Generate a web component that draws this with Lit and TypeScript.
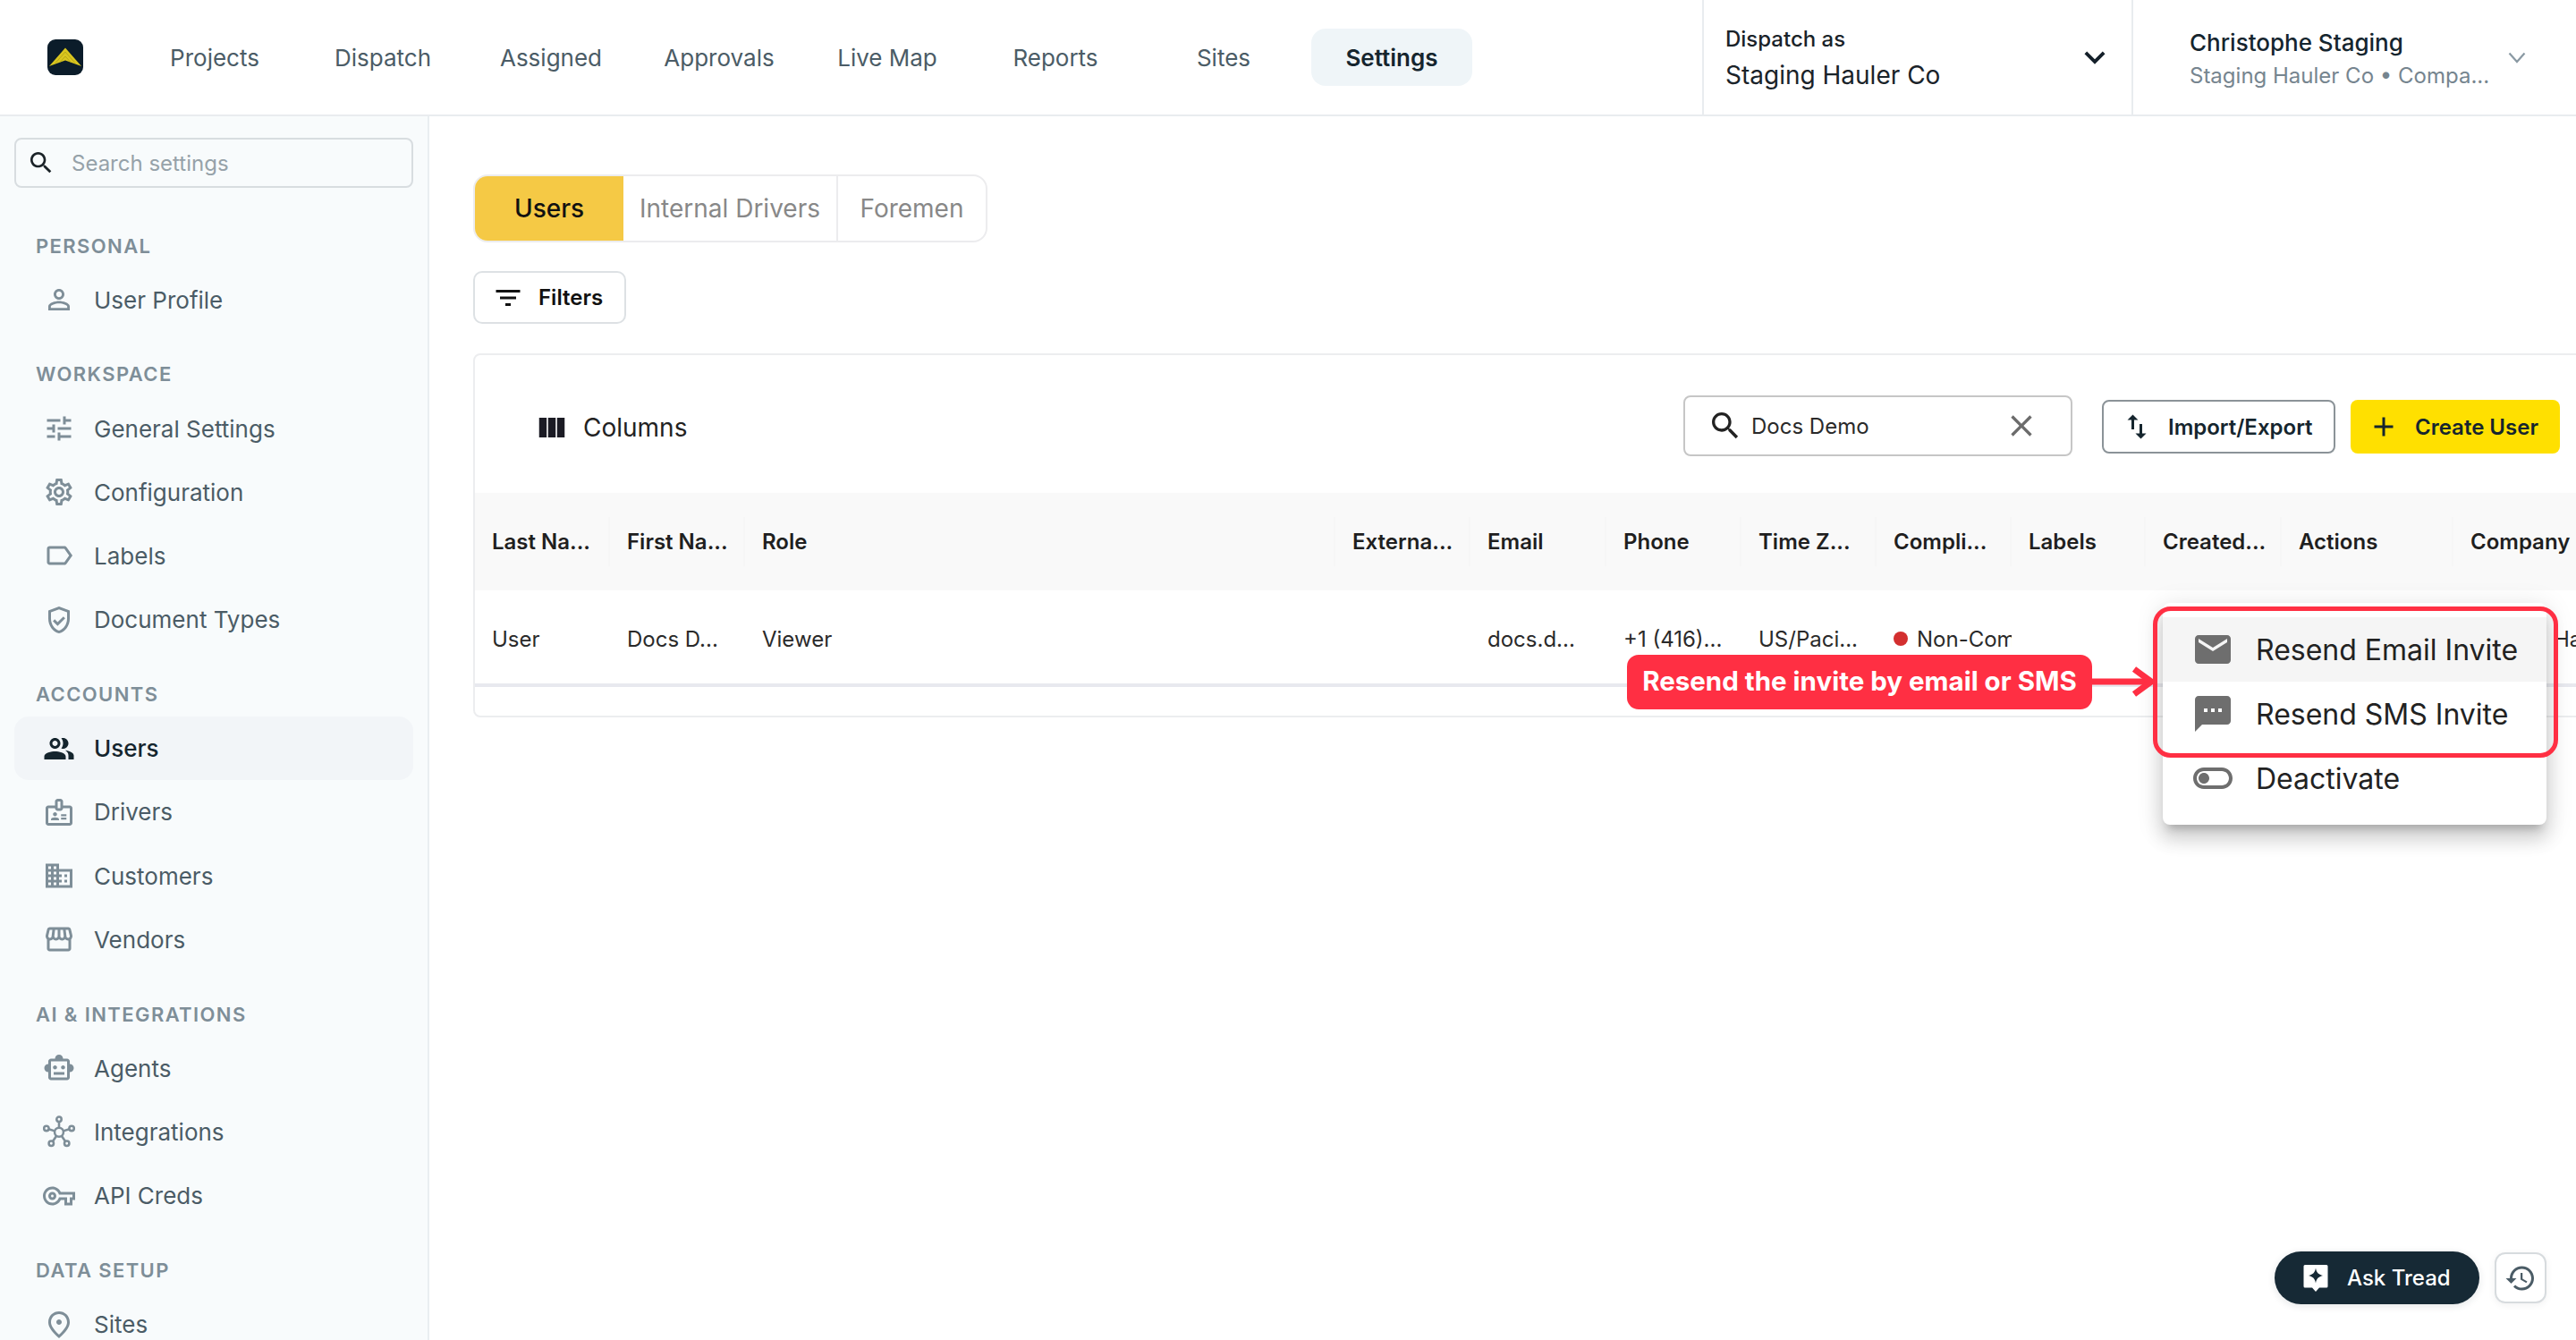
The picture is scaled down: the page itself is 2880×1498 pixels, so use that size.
import { LitElement, html, css } from "lit";
import { customElement } from "lit/decorators.js";

const P: Record<string, string> = {
  person: "M12 5.9c1.16 0 2.1.94 2.1 2.1s-.94 2.1-2.1 2.1S9.9 9.16 9.9 8s.94-2.1 2.1-2.1m0 9c2.97 0 6.1 1.46 6.1 2.1v1.1H5.9V17c0-.64 3.13-2.1 6.1-2.1M12 4C9.79 4 8 5.79 8 8s1.79 4 4 4 4-1.79 4-4-1.79-4-4-4zm0 9c-2.67 0-8 1.34-8 4v3h16v-3c0-2.66-5.33-4-8-4z",
  tune: "M3 17v2h6v-2H3zM3 5v2h10V5H3zm10 16v-2h8v-2h-8v-2h-2v6h2zM7 9v2H3v2h4v2h2V9H7zm14 4v-2H11v2h10zm-6-4h2V7h4V5h-4V3h-2v6z",
  gear: "M19.43 12.98c.04-.32.07-.64.07-.98 0-.34-.03-.66-.07-.98l2.11-1.65c.19-.15.24-.42.12-.64l-2-3.46c-.09-.16-.26-.25-.44-.25-.06 0-.12.01-.17.03l-2.49 1c-.52-.4-1.08-.73-1.69-.98l-.38-2.65C14.46 2.18 14.25 2 14 2h-4c-.25 0-.46.18-.49.42l-.38 2.65c-.61.25-1.17.59-1.69.98l-2.49-1c-.06-.02-.12-.03-.18-.03-.17 0-.34.09-.43.25l-2 3.46c-.13.22-.07.49.12.64l2.11 1.65c-.04.32-.07.65-.07.98 0 .33.03.66.07.98l-2.11 1.65c-.19.15-.24.42-.12.64l2 3.46c.09.16.26.25.44.25.06 0 .12-.01.17-.03l2.49-1c.52.4 1.08.73 1.69.98l.38 2.65c.03.24.24.42.49.42h4c.25 0 .46-.18.49-.42l.38-2.65c.61-.25 1.17-.59 1.69-.98l2.49 1c.06.02.12.03.18.03.17 0 .34-.09.43-.25l2-3.46c.12-.22.07-.49-.12-.64l-2.11-1.65zm-1.98-1.71c.04.31.05.52.05.73 0 .21-.02.43-.05.73l-.14 1.13.89.7 1.08.84-.7 1.21-1.27-.51-1.04-.42-.9.68c-.43.32-.84.56-1.25.73l-1.06.43-.16 1.13-.2 1.35h-1.4l-.19-1.35-.16-1.13-1.06-.43c-.43-.18-.83-.41-1.23-.71l-.91-.7-1.06.43-1.27.51-.7-1.21 1.08-.84.89-.7-.14-1.13c-.03-.31-.05-.54-.05-.74s.02-.43.05-.73l.14-1.13-.89-.7-1.08-.84.7-1.21 1.27.51 1.04.42.9-.68c.43-.32.84-.56 1.25-.73l1.06-.43.16-1.13.2-1.35h1.39l.19 1.35.16 1.13 1.06.43c.43.18.83.41 1.23.71l.91.7 1.06-.43 1.27-.51.7 1.21-1.07.85-.89.7.14 1.13zM12 8c-2.21 0-4 1.79-4 4s1.79 4 4 4 4-1.79 4-4-1.79-4-4-4zm0 6c-1.1 0-2-.9-2-2s.9-2 2-2 2 .9 2 2-.9 2-2 2z",
  label: "M17.63 5.84C17.27 5.33 16.67 5 16 5L5 5.01C3.9 5.01 3 5.9 3 7v10c0 1.1.9 1.99 2 1.99L16 19c.67 0 1.27-.33 1.63-.84L22 12l-4.37-6.16zM16 17H5V7h11l3.55 5L16 17z",
  shield: "M12 2 4 5v6.09c0 5.05 3.41 9.76 8 10.91 4.59-1.15 8-5.86 8-10.91V5l-8-3zm6 9.09c0 4-2.55 7.7-6 8.83-3.45-1.13-6-4.82-6-8.83v-4.7l6-2.25 6 2.25v4.7zm-9.18.46L7.4 12.96 10.94 16.5l5.66-5.66-1.41-1.41-4.24 4.24-2.13-2.12z",
  people: "M16.67 13.13C18.04 14.06 19 15.32 19 17v3h4v-3c0-2.18-3.57-3.47-6.33-3.87zM15 12c2.21 0 4-1.79 4-4s-1.79-4-4-4c-.47 0-.91.1-1.33.24C14.5 5.27 15 6.58 15 8s-.5 2.73-1.33 3.76c.42.14.86.24 1.33.24zM9 12c2.21 0 4-1.79 4-4s-1.79-4-4-4-4 1.79-4 4 1.79 4 4 4zm0-6c1.1 0 2 .9 2 2s-.9 2-2 2-2-.9-2-2 .9-2 2-2zM9 14c-2.67 0-8 1.2-8 3.6V20h16v-2.4C17 15.2 11.67 14 9 14z",
  badge: "M20 7h-5V4c0-1.1-.9-2-2-2h-2c-1.1 0-2 .9-2 2v3H4c-1.1 0-2 .9-2 2v11c0 1.1.9 2 2 2h16c1.1 0 2-.9 2-2V9c0-1.1-.9-2-2-2zM11 4h2v5h-2V4zm9 16H4V9h5c0 1.1.9 2 2 2h2c1.1 0 2-.9 2-2h5v11zM9 15c.83 0 1.5-.67 1.5-1.5S9.83 12 9 12s-1.5.67-1.5 1.5S8.17 15 9 15zm2.08 1.18C10.44 15.9 9.74 15.75 9 15.75s-1.44.15-2.08.43c-.56.24-.92.78-.92 1.39V18h6v-.43c0-.61-.36-1.15-.92-1.39zM13.5 13.5h4V15h-4zM13.5 16h4v1.5h-4z",
  domain: "M12 7V3H2v18h20V7H12zM6 19H4v-2h2v2zm0-4H4v-2h2v2zm0-4H4V9h2v2zm0-4H4V5h2v2zm4 12H8v-2h2v2zm0-4H8v-2h2v2zm0-4H8V9h2v2zm0-4H8V5h2v2zm10 12h-8v-2h2v-2h-2v-2h2v-2h-2V9h8v10zm-2-8h-2v2h2v-2zm0 4h-2v2h2v-2z",
  store: "M21.9 8.89l-1.05-4.37c-.22-.9-1-1.52-1.91-1.52H5.05c-.9 0-1.69.63-1.9 1.52L2.1 8.89c-.24 1.02-.02 2.06.62 2.88.08.11.19.19.28.29V19c0 1.1.9 2 2 2h14c1.1 0 2-.9 2-2v-6.94c.09-.09.2-.18.28-.28.64-.82.87-1.87.62-2.89zm-2.99-3.9 1.05 4.37c.1.42.01.84-.25 1.17-.14.18-.44.47-.94.47-.61 0-1.14-.49-1.21-1.14L16.98 5l1.93-.01zM13 5h1.96l.54 4.52c.05.39-.07.78-.33 1.07-.22.26-.54.41-.95.41-.67 0-1.22-.59-1.22-1.31V5zM8.49 9.52 9.04 5H11v4.69c0 .72-.55 1.31-1.29 1.31-.34 0-.65-.15-.89-.41-.25-.29-.37-.68-.33-1.07zm-4.45-.16L5.05 5h1.97l-.58 4.86c-.08.65-.6 1.14-1.21 1.14-.49 0-.8-.29-.93-.47-.27-.32-.36-.75-.26-1.17zM5 19v-6.03c.08.01.15.03.23.03.87 0 1.66-.36 2.24-.95.6.6 1.4.95 2.31.95.87 0 1.65-.36 2.23-.93.59.57 1.39.93 2.29.93.84 0 1.64-.35 2.24-.95.58.59 1.37.95 2.24.95.08 0 .15-.02.23-.03V19H5z",
  robot: "M20 9V7c0-1.1-.9-2-2-2h-3c0-1.66-1.34-3-3-3S9 3.34 9 5H6c-1.1 0-2 .9-2 2v2c-1.66 0-3 1.34-3 3s1.34 3 3 3v4c0 1.1.9 2 2 2h12c1.1 0 2-.9 2-2v-4c1.66 0 3-1.34 3-3s-1.34-3-3-3zm-2 10H6V7h12v12zm-9-6c-.83 0-1.5-.67-1.5-1.5S8.17 10 9 10s1.5.67 1.5 1.5S9.83 13 9 13zm7.5-1.5c0 .83-.67 1.5-1.5 1.5s-1.5-.67-1.5-1.5.67-1.5 1.5-1.5 1.5.67 1.5 1.5zM8 15h8v2H8v-2z",
  key: "M22 19h-6v-4h-2.68c-1.14 2.42-3.6 4-6.32 4-3.86 0-7-3.14-7-7s3.14-7 7-7c2.72 0 5.17 1.58 6.32 4H24v6h-2v4zm-4-2h2v-4h2v-2H11.94l-.23-.67C11.01 8.34 9.11 7 7 7c-2.76 0-5 2.24-5 5s2.24 5 5 5c2.11 0 4.01-1.34 4.71-3.33l.23-.67H18v4zM7 15c-1.65 0-3-1.35-3-3s1.35-3 3-3 3 1.35 3 3-1.35 3-3 3zm0-4c-.55 0-1 .45-1 1s.45 1 1 1 1-.45 1-1-.45-1-1-1z",
  place: "M12 12c-1.1 0-2-.9-2-2s.9-2 2-2 2 .9 2 2-.9 2-2 2zm6-1.8C18 6.57 15.35 4 12 4s-6 2.57-6 6.2c0 2.34 1.95 5.44 6 9.14 4.05-3.7 6-6.8 6-9.14zM12 2c4.2 0 8 3.22 8 8.2 0 3.32-2.67 7.25-8 11.8-5.33-4.55-8-8.48-8-11.8C4 5.22 7.8 2 12 2z",
  search: "M15.5 14h-.79l-.28-.27C15.41 12.59 16 11.11 16 9.5 16 5.91 13.09 3 9.5 3S3 5.91 3 9.5 5.91 16 9.5 16c1.61 0 3.09-.59 4.23-1.57l.27.28v.79l5 4.99L20.49 19l-4.99-5zm-6 0C7.01 14 5 11.99 5 9.5S7.01 5 9.5 5 14 7.01 14 9.5 11.99 14 9.5 14z",
  filter: "M10 18h4v-2h-4v2zM3 6v2h18V6H3zm3 7h12v-2H6v2z",
  columns: "M14.67 5v14H9.33V5h5.34zm1 14H21V5h-5.33v14zm-7.34 0V5H3v14h5.33z",
  close: "M19 6.41 17.59 5 12 10.59 6.41 5 5 6.41 10.59 12 5 17.59 6.41 19 12 13.41 17.59 19 19 17.59 13.41 12z",
  swap: "M16 17.01V10h-2v7.01h-3L15 21l4-3.99h-3zM9 3 5 6.99h3V14h2V6.99h3L9 3z",
  add: "M19 13h-6v6h-2v-6H5v-2h6V5h2v6h6v2z",
  email: "M20 4H4c-1.1 0-1.99.9-1.99 2L2 18c0 1.1.9 2 2 2h16c1.1 0 2-.9 2-2V6c0-1.1-.9-2-2-2zm0 4-8 5-8-5V6l8 5 8-5v2z",
  sms: "M20 2H4c-1.1 0-1.99.9-1.99 2L2 22l4-4h14c1.1 0 2-.9 2-2V4c0-1.1-.9-2-2-2zM9 11H7V9h2v2zm4 0h-2V9h2v2zm4 0h-2V9h2v2z",
  toggle: "M17 6H7c-3.31 0-6 2.69-6 6s2.69 6 6 6h10c3.31 0 6-2.69 6-6s-2.69-6-6-6zm0 10H7c-2.21 0-4-1.79-4-4s1.79-4 4-4h10c2.21 0 4 1.79 4 4s-1.79 4-4 4zM7 9c-1.66 0-3 1.34-3 3s1.34 3 3 3 3-1.34 3-3-1.34-3-3-3z",
  history: "M13 3c-4.97 0-9 4.03-9 9H1l3.89 3.89.07.14L9 12H6c0-3.87 3.13-7 7-7s7 3.13 7 7-3.13 7-7 7c-1.93 0-3.68-.79-4.94-2.06l-1.42 1.42C8.27 19.99 10.51 21 13 21c4.97 0 9-4.03 9-9s-4.03-9-9-9zm-1 5v5l4.28 2.54.72-1.21-3.5-2.08V8H12z",
  expand: "M16.59 8.59 12 13.17 7.41 8.59 6 10l6 6 6-6z",
};

const icon = (name: string, cls = "") => html`<svg class="ic ${cls}" viewBox="0 0 24 24" fill="currentColor"><path d=${P[name]}></path></svg>`;

const hub = html`<svg class="ic side" viewBox="0 0 24 24" fill="none" stroke="currentColor" stroke-width="1.7">
  <circle cx="12" cy="12.5" r="3.3"></circle>
  <circle cx="12" cy="2.8" r="1.8"></circle>
  <circle cx="2.6" cy="9.6" r="1.8"></circle>
  <circle cx="21.4" cy="9.6" r="1.8"></circle>
  <circle cx="6.2" cy="20.8" r="1.8"></circle>
  <circle cx="17.8" cy="20.8" r="1.8"></circle>
  <path d="M12 4.6v4.6M4.3 10.2l4.6 1.4M19.7 10.2l-4.6 1.4M7.3 19.3l2.7-4M16.7 19.3l-2.7-4"></path>
</svg>`;

const NAV = ["Projects", "Dispatch", "Assigned", "Approvals", "Live Map", "Reports", "Sites", "Settings"];

const SECTIONS: { title: string; items: { label: string; icon: string; active?: boolean }[] }[] = [
  { title: "PERSONAL", items: [{ label: "User Profile", icon: "person" }] },
  {
    title: "WORKSPACE",
    items: [
      { label: "General Settings", icon: "tune" },
      { label: "Configuration", icon: "gear" },
      { label: "Labels", icon: "label" },
      { label: "Document Types", icon: "shield" },
    ],
  },
  {
    title: "ACCOUNTS",
    items: [
      { label: "Users", icon: "people", active: true },
      { label: "Drivers", icon: "badge" },
      { label: "Customers", icon: "domain" },
      { label: "Vendors", icon: "store" },
    ],
  },
  {
    title: "AI & INTEGRATIONS",
    items: [
      { label: "Agents", icon: "robot" },
      { label: "Integrations", icon: "hub" },
      { label: "API Creds", icon: "key" },
    ],
  },
  { title: "DATA SETUP", items: [{ label: "Sites", icon: "place" }] },
];

const HEAD = ["Last Na...", "First Na...", "Role", "Externa...", "Email", "Phone", "Time Z...", "Compli...", "Labels", "Created...", "Actions", "Company"];
const ROW = ["User", "Docs D...", "Viewer", "", "docs.d...", "+1 (416)...", "US/Paci...", "", "", "", "", "Staging Hauler Co"];

@customElement("app-root")
export class AppRoot extends LitElement {
  static styles = css`
    :host {
      display: block;
      position: relative;
      width: 100%;
      height: 100vh;
      overflow: hidden;
      background: #fff;
      font-family: Inter, "Liberation Sans", sans-serif;
      color: #222;
    }
    * { box-sizing: border-box; }
    .ic { display: block; flex: none; width: 36px; height: 36px; }

    header {
      display: flex;
      align-items: stretch;
      height: 130px;
      border-bottom: 2px solid #e9ecef;
      background: #fff;
    }
    .logo { flex: none; align-self: center; margin-left: 53px; width: 40px; height: 40px; }
    nav { display: flex; align-items: center; gap: 8px; margin-left: 57px; }
    .nav-item {
      width: 180px;
      height: 64px;
      display: flex;
      align-items: center;
      justify-content: center;
      border-radius: 16px;
      font-size: 26px;
      color: #4b5c66;
    }
    .nav-item.on { background: #eff5f8; color: #15252e; font-weight: 600; }
    .dispatch {
      margin-left: auto;
      width: 480px;
      border-left: 2px solid #e9ecef;
      padding: 0 18px 0 24px;
      display: flex;
      align-items: center;
      justify-content: space-between;
    }
    .stack { display: flex; flex-direction: column; }
    .dispatch .k { font-size: 24px; line-height: 40px; font-weight: 500; color: #1a2329; }
    .dispatch .v { font-size: 28px; line-height: 40px; color: #1a2329; }
    .chev { width: 46px; height: 46px; color: #15202a; }
    .user {
      width: 497px;
      border-left: 2px solid #e9ecef;
      padding: 3px 48px 0 63px;
      display: flex;
      align-items: center;
      justify-content: space-between;
    }
    .user .k { font-size: 26px; line-height: 37px; font-weight: 500; color: #15252e; }
    .user .v { font-size: 24px; line-height: 37px; color: #76858f; }
    .chev2 { width: 36px; height: 36px; color: #8a99a3; margin-top: -3px; }

    .body { display: flex; height: calc(100vh - 130px); }
    aside {
      flex: none;
      width: 480px;
      height: 100%;
      overflow: hidden;
      background: #f8fbfc;
      border-right: 2px solid #e9eef1;
      padding: 24px 16px 0;
    }
    .side-search {
      height: 56px;
      border: 2px solid #d8dde0;
      border-radius: 8px;
      display: flex;
      align-items: center;
      gap: 18px;
      padding-left: 12px;
      font-size: 24px;
      color: #96a2a9;
    }
    .side-search .ic { width: 32px; height: 32px; color: #1b2328; }
    .sections { display: flex; flex-direction: column; gap: 32.8px; margin-top: 49.5px; }
    .sec-title {
      font-size: 22px;
      line-height: 30px;
      font-weight: 600;
      letter-spacing: 1.4px;
      color: #7e8e98;
      padding-left: 24px;
      margin-bottom: 10px;
    }
    .row-item {
      height: 71.2px;
      display: flex;
      align-items: center;
      gap: 21px;
      padding-left: 32px;
      border-radius: 16px;
      font-size: 26px;
      color: #4b5c66;
    }
    .row-item .ic { color: #7e8e98; }
    .row-item.on { background: #f2f5f8; color: #15252e; font-weight: 500; }
    .row-item.on .ic { color: #15252e; }

    main { flex: 1; min-width: 0; padding: 65px 0 0 49px; overflow: hidden; }
    .tabs {
      display: inline-flex;
      height: 76px;
      border: 2px solid #ececee;
      border-radius: 16px;
      overflow: hidden;
      font-size: 28px;
      color: #888;
      vertical-align: top;
    }
    .tab { display: flex; align-items: center; justify-content: center; }
    .tab.users { width: 166px; background: #f5c945; color: #111; font-weight: 500; }
    .tab.internal { width: 240px; border-right: 2px solid #ececee; }
    .tab.foremen { width: 165px; }
    .filters {
      display: flex;
      align-items: center;
      gap: 16px;
      width: 171px;
      height: 59px;
      margin-top: 32px;
      padding-left: 19px;
      border: 2px solid #dde1e4;
      border-radius: 10px;
      font-size: 24px;
      font-weight: 600;
      color: #111;
    }
    .card {
      width: 2400px;
      height: 407px;
      margin-top: 33px;
      border: 2px solid #ecedef;
      border-radius: 8px;
      display: flex;
      flex-direction: column;
    }
    .toolbar {
      flex: none;
      height: 154px;
      display: flex;
      align-items: center;
      padding: 6px 65px 0 72px;
    }
    .cols { display: flex; align-items: center; gap: 16px; font-size: 28px; color: #222; margin: 2px auto 0 0; }
    .cols .ic { width: 38px; height: 38px; color: #1b1b24; margin-left: -5px; }
    .tsearch {
      width: 435px;
      height: 68px;
      margin: 0 33px 2px 0;
      border: 2px solid #c6c6c6;
      border-radius: 8px;
      display: flex;
      align-items: center;
      padding: 0 35px 0 25px;
      gap: 9px;
      font-size: 24px;
      color: #2a2a2a;
    }
    .tsearch .ic { width: 40px; height: 40px; color: #222; }
    .tsearch span { flex: 1; }
    .tsearch .x { color: #6b6b6b; }
    .btn {
      height: 60px;
      display: flex;
      align-items: center;
      border-radius: 8px;
      font-size: 24px;
      font-weight: 600;
      color: #15252e;
      gap: 17px;
    }
    .btn.imp { width: 261px; border: 2px solid #8b9398; padding-left: 19px; margin-right: 17px; }
    .btn.new { width: 234px; background: #ffe000; padding-left: 19px; }
    .grid {
      display: grid;
      grid-template-columns: 151px 151px 660px 151px 152px 151px 151px 151px 150px 152px 192px 200px;
    }
    .thead { height: 109px; background: #f9f9f9; font-size: 24px; font-weight: 600; color: #1f1f1f; }
    .tbody { height: 104px; font-size: 24px; color: #2a2a2a; }
    .cell { display: flex; align-items: center; padding: 0 2px 0 19px; min-width: 0; overflow: hidden; white-space: nowrap; }
    .tbody .cell { padding-top: 4px; }
    .thead .cell { justify-content: space-between; padding-right: 0; }
    .sep { flex: none; width: 2px; height: 55px; background: #f6f6f6; }
    .comp { gap: 10px; }
    .dot { flex: none; width: 16px; height: 16px; border-radius: 50%; background: #d32f2f; }
    .rule { height: 4px; background: #e8e9ef; }

    .menu {
      position: absolute;
      left: 2418px;
      top: 674px;
      width: 429px;
      height: 248px;
      padding-top: 16px;
      background: #fff;
      border-radius: 8px;
      box-shadow: 0 10px 10px -6px rgba(0,0,0,.2), 0 16px 20px 2px rgba(0,0,0,.12), 0 6px 28px 4px rgba(0,0,0,.1);
    }
    .mi {
      height: 72px;
      display: flex;
      align-items: center;
      gap: 24px;
      padding-left: 32px;
      font-size: 32px;
      color: #222;
    }
    .mi.hl { background: #f5f5f5; }
    .mi .ic { width: 48px; height: 48px; color: #6e6e6e; }
    .mark {
      position: absolute;
      left: 2407px;
      top: 678px;
      width: 453px;
      height: 169px;
      border: 5px solid #ff2f43;
      border-radius: 20px;
    }
    .callout {
      position: absolute;
      left: 1819px;
      top: 732px;
      width: 520px;
      height: 61px;
      padding-bottom: 4px;
      display: flex;
      align-items: center;
      justify-content: center;
      border-radius: 13px;
      background: #ff2f43;
      color: #fff;
      font-size: 29.5px;
      font-weight: 700;
      white-space: nowrap;
    }
    .arrow { position: absolute; left: 2339px; top: 744px; width: 70px; height: 36px; }

    .fab { position: absolute; right: 33px; bottom: 40px; display: flex; align-items: center; gap: 17px; }
    .ask {
      width: 229px;
      height: 59px;
      border-radius: 30px;
      background: #162935;
      color: #fff;
      display: flex;
      align-items: center;
      gap: 17px;
      padding-left: 28px;
      font-size: 24px;
      font-weight: 500;
      box-shadow: 0 2px 8px rgba(22,41,53,.12);
    }
    .hist {
      width: 58px;
      height: 57px;
      border: 2px solid #d7dbde;
      border-radius: 12px;
      background: #fff;
      display: flex;
      align-items: center;
      justify-content: center;
      color: #4b5c66;
      box-shadow: 0 2px 8px rgba(0,0,0,.06);
    }
  `;

  private logo() {
    return html`<svg class="logo" viewBox="0 0 40 40">
      <rect width="40" height="40" rx="9" fill="#0b1c2a"></rect>
      <path d="M20 9.5 38 30 20 23.5 2 30z" fill="#d9c61f"></path>
      <path d="M20 14 31 26.5M20 14 9 26.5M20 19 26 25.5M20 19 14 25.5" stroke="#b9a716" stroke-width="1" fill="none"></path>
    </svg>`;
  }

  render() {
    return html`
      <header>
        ${this.logo()}
        <nav>
          ${NAV.map((n) => html`<div class="nav-item ${n === "Settings" ? "on" : ""}">${n}</div>`)}
        </nav>
        <div class="dispatch">
          <div class="stack"><span class="k">Dispatch as</span><span class="v">Staging Hauler Co</span></div>
          ${icon("expand", "chev")}
        </div>
        <div class="user">
          <div class="stack"><span class="k">Christophe Staging</span><span class="v">Staging Hauler Co • Compa...</span></div>
          <svg class="chev2" viewBox="0 0 36 36" fill="none" stroke="currentColor" stroke-width="2.2"><path d="M9.5 13.5 18 23l8.5-9.5"></path></svg>
        </div>
      </header>
      <div class="body">
        <aside>
          <div class="side-search">${icon("search")}<span>Search settings</span></div>
          <div class="sections">
            ${SECTIONS.map(
              (s) => html`<section>
                <div class="sec-title">${s.title}</div>
                ${s.items.map(
                  (i) => html`<div class="row-item ${i.active ? "on" : ""}">
                    ${i.icon === "hub" ? hub : icon(i.icon)}<span>${i.label}</span>
                  </div>`
                )}
              </section>`
            )}
          </div>
        </aside>
        <main>
          <div class="tabs">
            <div class="tab users">Users</div>
            <div class="tab internal">Internal Drivers</div>
            <div class="tab foremen">Foremen</div>
          </div>
          <div class="filters">${icon("filter")}<span>Filters</span></div>
          <div class="card">
            <div class="toolbar">
              <div class="cols">${icon("columns")}<span>Columns</span></div>
              <div class="tsearch">${icon("search")}<span>Docs Demo</span>${icon("close", "x")}</div>
              <div class="btn imp">${icon("swap")}<span>Import/Export</span></div>
              <div class="btn new">${icon("add")}<span>Create User</span></div>
            </div>
            <div class="grid thead">
              ${HEAD.map((h) => html`<div class="cell"><span>${h}</span><i class="sep"></i></div>`)}
            </div>
            <div class="grid tbody">
              ${ROW.map((c, i) =>
                i === 7
                  ? html`<div class="cell comp"><i class="dot"></i><span>Non-Compliant</span></div>`
                  : html`<div class="cell"><span>${c}</span></div>`
              )}
            </div>
            <div class="rule"></div>
          </div>
        </main>
      </div>

      <div class="menu">
        <div class="mi hl">${icon("email")}<span>Resend Email Invite</span></div>
        <div class="mi">${icon("sms")}<span>Resend SMS Invite</span></div>
        <div class="mi">${icon("toggle")}<span>Deactivate</span></div>
      </div>
      <div class="mark"></div>
      <div class="callout">Resend the invite by email or SMS</div>
      <svg class="arrow" viewBox="0 0 70 36" fill="none" stroke="#ff2f43" stroke-width="7">
        <path d="M0 18H66"></path>
        <path d="M47 4 66 18 47 32"></path>
      </svg>

      <div class="fab">
        <div class="ask">
          <svg class="ic" viewBox="0 0 36 36"><path d="M6 3h24a1.5 1.5 0 0 1 1.5 1.5V27a1.5 1.5 0 0 1-1.5 1.5h-8L18 33l-4-4.5H6A1.5 1.5 0 0 1 4.5 27V4.5A1.5 1.5 0 0 1 6 3z" fill="#fff"></path><path d="M18 6.5c.8 5 3 7.3 8 8.5-5 1.2-7.2 3.5-8 8.5-.8-5-3-7.3-8-8.5 5-1.2 7.2-3.5 8-8.5z" fill="#162935"></path></svg>
          <span>Ask Tread</span>
        </div>
        <div class="hist">${icon("history")}</div>
      </div>
    `;
  }
}
